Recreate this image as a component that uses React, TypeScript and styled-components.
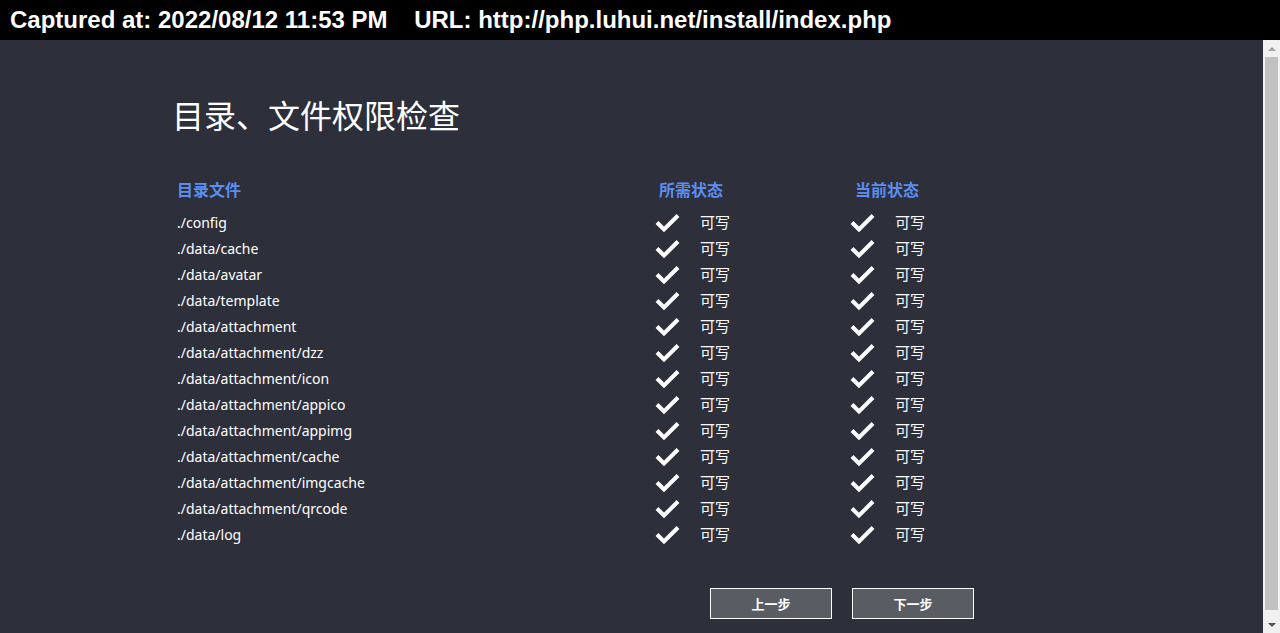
import styled, { createGlobalStyle } from 'styled-components';

const GlobalStyle = createGlobalStyle`
    html, body {
        margin: 0;
        padding: 0;
        height: 100%;
        overflow: hidden;
        background: #2d2f3a;
    }
`;

const Page = styled.div`
    display: flex;
    flex-direction: column;
    height: 633px;
    font-family: "Noto Sans", "Noto Sans CJK SC", sans-serif;
`;

const CaptureBar = styled.div`
    height: 40px;
    flex: none;
    background: #000;
    color: #fff;
    font-family: "Liberation Sans", Arial, sans-serif;
    font-weight: bold;
    font-size: 24px;
    line-height: 40px;
    padding-left: 10px;
    white-space: pre;
`;

const Viewport = styled.div`
    flex: 1;
    display: flex;
    min-height: 0;
`;

const Content = styled.div`
    flex: 1;
    padding: 54px 0 0 174px;
    color: #fff;
`;

const Title = styled.h1`
    margin: 0 0 39px -2px;
    font-size: 32px;
    font-weight: normal;
    line-height: 44px;
`;

const Table = styled.div`
    display: grid;
    grid-template-columns: 478px 195px 195px;
    padding-left: 3px;
`;

const HeadCell = styled.div<{ $indent?: number }>`
    color: #5b8ef0;
    font-weight: bold;
    font-size: 16px;
    line-height: 26px;
    padding-left: ${(p) => p.$indent ?? 0}px;
    margin-bottom: 7px;
`;

const PathCell = styled.div`
    font-size: 14px;
    line-height: 26px;
`;

const StateCell = styled.div`
    display: flex;
    align-items: center;
    gap: 20px;
    height: 26px;
    font-size: 15px;
    line-height: 22px;
    & > span {
        margin-top: -3px;
    }
`;

const Actions = styled.div`
    display: flex;
    gap: 20px;
    margin: 40px 0 0 536px;
`;

const StepButton = styled.button`
    width: 122px;
    height: 31px;
    background: #5a5c63;
    border: 1px solid #fff;
    color: #fff;
    font-family: "Noto Sans CJK SC", sans-serif;
    font-weight: bold;
    font-size: 13px;
    padding: 0;
`;

const Scrollbar = styled.div`
    width: 17px;
    flex: none;
    background: #f1f1f1;
    display: flex;
    flex-direction: column;
    align-items: center;
`;

const Arrow = styled.div<{ $down?: boolean }>`
    height: 17px;
    display: flex;
    align-items: center;
    justify-content: center;
    &::after {
        content: '';
        border-left: 4px solid transparent;
        border-right: 4px solid transparent;
        ${(p) => (p.$down ? 'border-top: 4px solid #505050;' : 'border-bottom: 4px solid #a3a3a3;')}
    }
`;

const Thumb = styled.div`
    flex: 1;
    width: 13px;
    background: #c1c1c1;
    margin: 0 0 6px;
`;

const dirs = [
    './config',
    './data/cache',
    './data/avatar',
    './data/template',
    './data/attachment',
    './data/attachment/dzz',
    './data/attachment/icon',
    './data/attachment/appico',
    './data/attachment/appimg',
    './data/attachment/cache',
    './data/attachment/imgcache',
    './data/attachment/qrcode',
    './data/log',
];

function Check() {
    return (
        <svg width="25" height="20" viewBox="0 0 25 20">
            <path d="M2 9.5 L9 16.5 L23 2.5" fill="none" stroke="#fff" strokeWidth="4" strokeLinejoin="miter" />
        </svg>
    );
}

function State() {
    return (
        <StateCell>
            <Check />
            <span>可写</span>
        </StateCell>
    );
}

export default function App() {
    return (
        <Page>
            <GlobalStyle />
            <CaptureBar>{'Captured at: 2022/08/12 11:53 PM    URL: http://php.luhui.net/install/index.php'}</CaptureBar>
            <Viewport>
                <Content>
                    <Title>目录、文件权限检查</Title>
                    <Table>
                        <HeadCell>目录文件</HeadCell>
                        <HeadCell $indent={4}>所需状态</HeadCell>
                        <HeadCell $indent={5}>当前状态</HeadCell>
                        {dirs.map((d) => (
                            <>
                                <PathCell key={d}>{d}</PathCell>
                                <State />
                                <State />
                            </>
                        ))}
                    </Table>
                    <Actions>
                        <StepButton>上一步</StepButton>
                        <StepButton>下一步</StepButton>
                    </Actions>
                </Content>
                <Scrollbar>
                    <Arrow />
                    <Thumb />
                    <Arrow $down />
                </Scrollbar>
            </Viewport>
        </Page>
    );
}
